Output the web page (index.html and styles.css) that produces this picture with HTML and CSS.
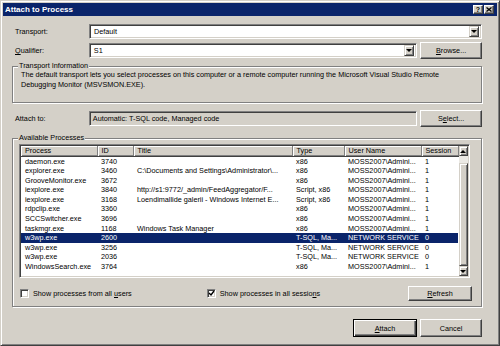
FILE: index.html
```html
<!DOCTYPE html>
<html lang="en">
<head>
  <meta charset="UTF-8">
  <title>Attach to Process</title>
  <link rel="stylesheet" href="styles.css">
</head>
<body>
  <div class="window">
    <div class="titlebar">
      <span class="title">Attach to Process</span>
      <span class="cap-btn help">?</span>
      <span class="cap-btn close">
        <svg width="6" height="5" viewBox="0 0 6 5"><path d="M0.5 0.5 L5.5 4.5 M5.5 0.5 L0.5 4.5" stroke="#000" stroke-width="1.3"/></svg>
      </span>
    </div>

    <div class="content">
      <div class="row row-transport">
        <span class="label">Transport:</span>
        <div class="combo combo-wide">
          <span class="combo-text">Default</span>
          <span class="drop"><i class="arrow-down"></i></span>
        </div>
      </div>

      <div class="row row-qualifier">
        <span class="label"><u>Q</u>ualifier:</span>
        <div class="combo combo-short">
          <span class="combo-text">S1</span>
          <span class="drop"><i class="arrow-down"></i></span>
        </div>
        <button class="btn btn-side"><span><u>B</u>rowse...</span></button>
      </div>

      <div class="group group-info">
        <span class="legend">Transport Information</span>
        <p>The default transport lets you select processes on this computer or a remote computer running the Microsoft Visual Studio Remote Debugging Monitor (MSVSMON.EXE).</p>
      </div>

      <div class="row row-attach">
        <span class="label">Attach to:</span>
        <div class="field">Automatic: T-SQL code, Managed code</div>
        <button class="btn btn-side"><span>S<u>e</u>lect...</span></button>
      </div>

      <div class="group group-procs">
        <span class="legend">Available Processes</span>
        <div class="list">
          <table class="procs">
            <colgroup>
              <col class="c-proc"><col class="c-id"><col class="c-title"><col class="c-type"><col class="c-user"><col class="c-sess">
            </colgroup>
            <thead>
              <tr><th>Process</th><th>ID</th><th>Title</th><th>Type</th><th>User Name</th><th>Session</th></tr>
            </thead>
            <tbody>
              <tr><td>daemon.exe</td><td>3740</td><td></td><td>x86</td><td>MOSS2007\Admini...</td><td>1</td></tr>
              <tr><td>explorer.exe</td><td>3460</td><td>C:\Documents and Settings\Administrator\...</td><td>x86</td><td>MOSS2007\Admini...</td><td>1</td></tr>
              <tr><td>GrooveMonitor.exe</td><td>3672</td><td></td><td>x86</td><td>MOSS2007\Admini...</td><td>1</td></tr>
              <tr><td>iexplore.exe</td><td>3840</td><td>http://s1:9772/_admin/FeedAggregator/F...</td><td>Script, x86</td><td>MOSS2007\Admini...</td><td>1</td></tr>
              <tr><td>iexplore.exe</td><td>3168</td><td>Loendimallide galerii - Windows Internet E...</td><td>Script, x86</td><td>MOSS2007\Admini...</td><td>1</td></tr>
              <tr><td>rdpclip.exe</td><td>3360</td><td></td><td>x86</td><td>MOSS2007\Admini...</td><td>1</td></tr>
              <tr><td>SCCSwitcher.exe</td><td>3696</td><td></td><td>x86</td><td>MOSS2007\Admini...</td><td>1</td></tr>
              <tr><td>taskmgr.exe</td><td>1168</td><td>Windows Task Manager</td><td>x86</td><td>MOSS2007\Admini...</td><td>1</td></tr>
              <tr class="selected"><td>w3wp.exe</td><td>2600</td><td></td><td>T-SQL, Ma...</td><td>NETWORK SERVICE</td><td>0</td></tr>
              <tr><td>w3wp.exe</td><td>3256</td><td></td><td>T-SQL, Ma...</td><td>NETWORK SERVICE</td><td>0</td></tr>
              <tr><td>w3wp.exe</td><td>2036</td><td></td><td>T-SQL, Ma...</td><td>NETWORK SERVICE</td><td>0</td></tr>
              <tr><td>WindowsSearch.exe</td><td>3764</td><td></td><td>x86</td><td>MOSS2007\Admini...</td><td>1</td></tr>
            </tbody>
          </table>
          <div class="vscroll">
            <span class="sb-btn"><i class="arrow-up"></i></span>
            <span class="sb-track"><span class="sb-thumb"></span></span>
            <span class="sb-btn"><i class="arrow-down"></i></span>
          </div>
        </div>

        <div class="opts">
          <label class="check"><span class="box"></span><span>Show processes from all <u>u</u>sers</span></label>
          <label class="check check-sessions"><span class="box checked">
            <svg width="7" height="7" viewBox="0 0 7 7"><path d="M1 3 L3 5 L6 1" fill="none" stroke="#000" stroke-width="1.4"/></svg>
          </span><span>Show processes in all sessio<u>n</u>s</span></label>
          <button class="btn btn-refresh"><span><u>R</u>efresh</span></button>
        </div>
      </div>

      <div class="actions">
        <button class="btn btn-default btn-attach"><span><u>A</u>ttach</span></button>
        <button class="btn btn-cancel"><span>Cancel</span></button>
      </div>
    </div>
  </div>
</body>
</html>
```

FILE: styles.css
```css
* {
  box-sizing: border-box;
  margin: 0;
  padding: 0;
}

body {
  background: #ffffff;
  font-family: "Liberation Sans", Arial, sans-serif;
  font-size: 7.25px;
  color: #000;
}

.window {
  width: 500px;
  height: 346px;
  background: #d4d0c8;
  border: 1px solid;
  border-color: #d4d0c8 #404040 #404040 #d4d0c8;
  box-shadow: inset 1px 1px #fff, inset -1px -1px #808080;
  padding: 2px;
}

/* title bar */
.titlebar {
  height: 13px;
  background: #0a246a;
  display: flex;
  align-items: center;
  gap: 1px;
  padding: 0 3px 0 2px;
}

.title {
  flex: 1;
  color: #fff;
  font-weight: bold;
  font-size: 8px;
}

.cap-btn {
  width: 10px;
  height: 9px;
  background: #d4d0c8;
  border: 1px solid;
  border-color: #fff #404040 #404040 #fff;
  box-shadow: inset -1px -1px #808080;
  display: flex;
  align-items: center;
  justify-content: center;
  font-weight: bold;
  font-size: 7px;
  line-height: 7px;
}

/* dialog body */
.content {
  padding: 8px 15px 0 9px;
}

.row {
  display: flex;
  align-items: center;
}

.label {
  width: 77px;
  padding-left: 3px;
}

.row-transport {
  height: 15px;
}

.row-qualifier {
  margin-top: 3px;
  height: 17px;
}

.row-attach {
  margin-top: 7px;
  height: 17px;
}

.combo, .field {
  height: 15px;
  border: 1px solid;
  border-color: #808080 #fff #fff #808080;
  box-shadow: inset 1px 1px #404040, inset -1px -1px #d4d0c8;
  display: flex;
  align-items: center;
  padding: 2px;
}

.combo {
  background: #fff;
}

.combo-wide {
  flex: 1;
}

.combo-short, .field {
  width: 329px;
}

.field {
  background: #d4d0c8;
  padding-left: 3px;
}

.combo-text {
  flex: 1;
  padding-left: 2px;
}

.drop {
  width: 10px;
  height: 11px;
  background: #d4d0c8;
  border: 1px solid;
  border-color: #d4d0c8 #404040 #404040 #d4d0c8;
  box-shadow: inset 1px 1px #fff, inset -1px -1px #808080;
  display: flex;
  align-items: center;
  justify-content: center;
}

.arrow-down, .arrow-up {
  display: block;
  width: 0;
  height: 0;
  border-left: 3px solid transparent;
  border-right: 3px solid transparent;
}

.arrow-down {
  border-top: 3px solid #000;
}

.arrow-up {
  border-bottom: 3px solid #000;
}

/* buttons */
.btn {
  font: inherit;
  color: #000;
  background: #d4d0c8;
  border: 1px solid;
  border-color: #fff #404040 #404040 #fff;
  box-shadow: inset -1px -1px #808080;
  display: flex;
  align-items: center;
  justify-content: center;
}

.btn-default {
  border-color: #000;
  box-shadow: inset 1px 1px #fff, inset -1px -1px #404040, inset -2px -2px #808080;
}

.btn-side {
  margin-left: 3px;
  width: 62px;
  height: 17px;
}

/* group boxes */
.group {
  position: relative;
  border: 1px solid #808080;
  box-shadow: inset 1px 1px #fff, 1px 1px 0 #fff;
}

.legend {
  position: absolute;
  top: -6px;
  left: 5px;
  padding: 0 1px;
  line-height: 10px;
  background: #d4d0c8;
}

.group-info {
  margin-top: 7px;
  height: 37px;
  padding: 3px 8px 0 8px;
}

.group-info p {
  line-height: 10px;
}

.group-procs {
  margin-top: 11px;
  height: 169px;
  padding: 5px 9px 0 6px;
}

/* process list */
.list {
  height: 134px;
  margin-right: 2px;
  background: #fff;
  border: 1px solid;
  border-color: #808080 #fff #fff #808080;
  box-shadow: inset 1px 1px #404040, inset -1px -1px #d4d0c8;
  padding: 1px;
  display: flex;
}

.procs {
  width: 437px;
  align-self: flex-start;
  border-collapse: collapse;
  table-layout: fixed;
}

.c-proc { width: 76px; }
.c-id { width: 36px; }
.c-title { width: 159px; }
.c-type { width: 52px; }
.c-user { width: 77px; }
.c-sess { width: 37px; }

.procs th {
  height: 10px;
  font-weight: normal;
  text-align: left;
  padding: 0 0 0 4px;
  background: #d4d0c8;
  border-right: 1px solid #808080;
  border-bottom: 1px solid #404040;
  box-shadow: inset 1px 1px #fff, inset 0 -1px #808080;
  line-height: 9px;
}

.procs td {
  height: 9.6px;
  line-height: 9.6px;
  padding: 0 0 0 4px;
  white-space: nowrap;
  overflow: hidden;
}

.procs tr.selected td {
  background: #0a246a;
  color: #fff;
}

.vscroll {
  width: 10px;
  display: flex;
  flex-direction: column;
}

.sb-btn {
  height: 10px;
  background: #d4d0c8;
  border: 1px solid;
  border-color: #d4d0c8 #404040 #404040 #d4d0c8;
  box-shadow: inset 1px 1px #fff, inset -1px -1px #808080;
  display: flex;
  align-items: center;
  justify-content: center;
}

.sb-track {
  flex: 1;
  background: #ebe9e4;
  display: flex;
  flex-direction: column;
  justify-content: flex-end;
}

.sb-thumb {
  height: 103px;
  background: #d4d0c8;
  border: 1px solid;
  border-color: #d4d0c8 #404040 #404040 #d4d0c8;
  box-shadow: inset 1px 1px #fff, inset -1px -1px #808080;
}

/* options row */
.opts {
  margin-top: 8px;
  height: 15px;
  display: flex;
  align-items: center;
}

.check {
  display: flex;
  align-items: center;
  gap: 4px;
  margin-left: 1px;
}

.check-sessions {
  margin-left: 75px;
}

.box {
  width: 9px;
  height: 9px;
  background: #fff;
  border: 1px solid;
  border-color: #808080 #fff #fff #808080;
  box-shadow: inset 1px 1px #404040, inset -1px -1px #d4d0c8;
  display: flex;
  align-items: center;
  justify-content: center;
}

.box svg {
  display: block;
}

.btn-refresh {
  margin-left: auto;
  width: 64px;
  height: 15px;
}

/* dialog buttons */
.actions {
  margin-top: 12px;
  display: flex;
  justify-content: flex-end;
  gap: 3px;
}

.btn-attach {
  width: 64px;
  height: 18px;
}

.btn-cancel {
  width: 62px;
  height: 18px;
}
```
